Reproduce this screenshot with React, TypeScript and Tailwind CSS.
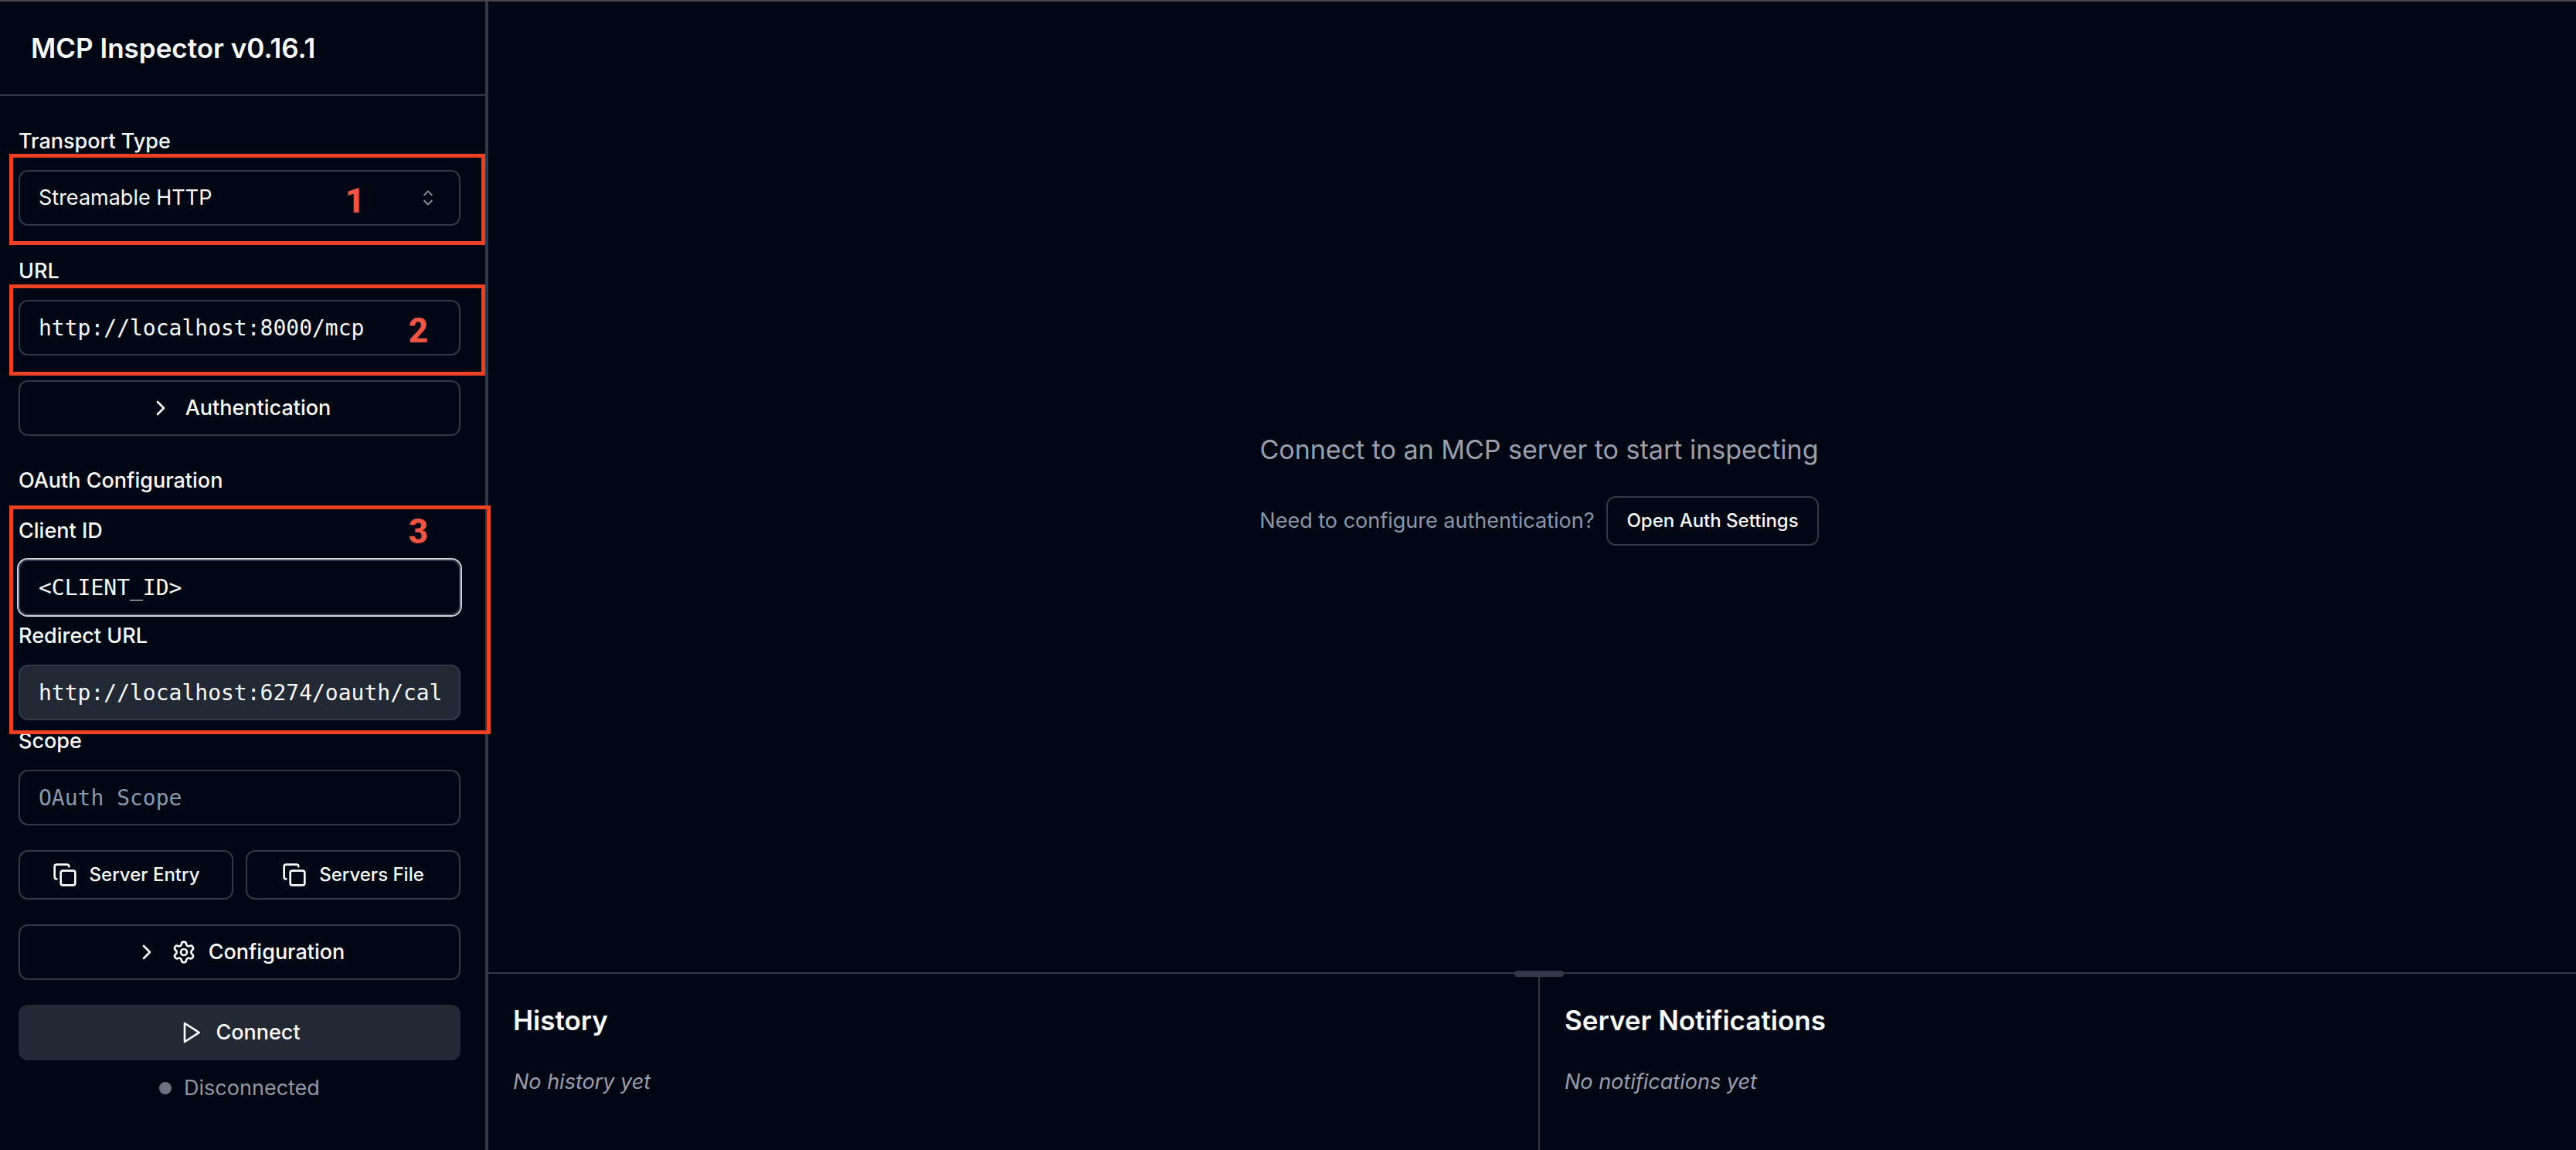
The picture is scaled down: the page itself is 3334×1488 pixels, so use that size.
import { ChevronRight, Copy, Settings } from "lucide-react";
import type { ReactNode } from "react";

const outline =
  "flex items-center justify-center gap-4 rounded-xl border-2 border-[#32374a] font-medium text-[#f8fafc]";
const field =
  "block h-[72px] w-full rounded-xl border-2 border-[#32374a] px-6 text-[#f8fafc] outline-none";
const mono = "font-['DejaVu_Sans_Mono',monospace] text-[28px] placeholder:text-[#8a97ad]";

function FieldLabel({ id, children }: { id: string; children: ReactNode }) {
  return (
    <label htmlFor={id} className="mb-[19px] block text-[27px] leading-[37px] font-medium">
      {children}
    </label>
  );
}

function CaretSort() {
  return (
    <svg
      viewBox="0 0 15 15"
      fill="currentColor"
      aria-hidden="true"
      className="pointer-events-none absolute top-5 right-[26px] size-8 text-[#8b8e98]"
    >
      <path
        fillRule="evenodd"
        clipRule="evenodd"
        d="M4.93179 5.43179C4.75605 5.60753 4.75605 5.89245 4.93179 6.06819C5.10753 6.24392 5.39245 6.24392 5.56819 6.06819L7.49999 4.13638L9.43179 6.06819C9.60753 6.24392 9.89245 6.24392 10.0682 6.06819C10.2439 5.89245 10.2439 5.60753 10.0682 5.43179L7.81819 3.18179C7.73379 3.0974 7.61933 3.04999 7.49999 3.04999C7.38064 3.04999 7.26618 3.0974 7.18179 3.18179L4.93179 5.43179ZM10.0682 9.56819C10.2439 9.39245 10.2439 9.10753 10.0682 8.93179C9.89245 8.75606 9.60753 8.75606 9.43179 8.93179L7.49999 10.8636L5.56819 8.93179C5.39245 8.75606 5.10753 8.75606 4.93179 8.93179C4.75605 9.10753 4.75605 9.39245 4.93179 9.56819L7.18179 11.8182C7.35753 11.9939 7.64245 11.9939 7.81819 11.8182L10.0682 9.56819Z"
      />
    </svg>
  );
}

function PlayIcon() {
  return (
    <svg
      viewBox="0 0 24 24"
      fill="none"
      stroke="currentColor"
      strokeWidth="2"
      strokeLinecap="round"
      strokeLinejoin="round"
      aria-hidden="true"
      className="size-8"
    >
      <polygon points="6 3 20 12 6 21 6 3" />
    </svg>
  );
}

const marker =
  "pointer-events-none absolute font-['Roboto',sans-serif] text-[44px] leading-[44px] font-extrabold text-[#ee5544]";
const frame = "pointer-events-none absolute z-10 border-5 border-[#ec4125]";

function Sidebar() {
  return (
    <aside className="w-[632px] shrink-0 border-r-4 border-[#32374a]">
      <header className="border-b-2 border-[#32374a] px-10 py-8">
        <h1 className="text-[35px] leading-[56px] font-semibold">MCP Inspector v0.16.1</h1>
      </header>

      <div className="pt-10 pr-8 pl-6">
        <FieldLabel id="transport">Transport Type</FieldLabel>
        <div className="relative">
          <select id="transport" className={`${field} appearance-none bg-transparent text-[27px]`}>
            <option>Streamable HTTP</option>
          </select>
          <CaretSort />
          <div className={`${frame} -top-[21px] -right-8 -bottom-[25px] -left-3`} />
          <span className={`${marker} top-[18px] right-[124px]`}>1</span>
        </div>

        <div className="mt-10">
          <FieldLabel id="url">URL</FieldLabel>
          <div className="relative">
            <input id="url" className={`${field} ${mono}`} defaultValue="http://localhost:8000/mcp" />
            <div className={`${frame} -top-5 -right-8 -bottom-[26px] -left-3`} />
            <span className={`${marker} top-[18px] right-[42px]`}>2</span>
          </div>
        </div>

        <button type="button" className={`${outline} mt-8 h-[72px] w-full text-[27px]`}>
          <ChevronRight className="size-8" />
          Authentication
        </button>

        <h2 className="mt-10 text-[27px] leading-9 font-medium">OAuth Configuration</h2>

        <div className="relative mt-7">
          <FieldLabel id="client">Client ID</FieldLabel>
          <input
            id="client"
            className={`${field} ${mono} ring-2 ring-[#d0d5e0]`}
            defaultValue="<CLIENT_ID>"
          />
          <div className="mt-2">
            <FieldLabel id="redirect">Redirect URL</FieldLabel>
            <input
              id="redirect"
              readOnly
              className={`${field} ${mono} bg-[#222834]`}
              value="http://localhost:6274/oauth/callback"
            />
          </div>
          <div className={`${frame} -top-[14px] -right-[39px] -bottom-[18px] -left-3`} />
          <span className={`${marker} -top-[2px] right-[42px]`}>3</span>
        </div>

        <div className="mt-2">
          <FieldLabel id="scope">Scope</FieldLabel>
          <input id="scope" className={`${field} ${mono}`} placeholder="OAuth Scope" />
        </div>

        <div className="mt-8 grid grid-cols-2 gap-4">
          <button type="button" className={`${outline} h-16 text-2xl`}>
            <Copy className="size-8" />
            Server Entry
          </button>
          <button type="button" className={`${outline} h-16 text-2xl`}>
            <Copy className="size-8" />
            Servers File
          </button>
        </div>

        <button type="button" className={`${outline} mt-8 h-[72px] w-full text-[27px]`}>
          <ChevronRight className="size-8" />
          <Settings className="size-8" />
          Configuration
        </button>

        <button
          type="button"
          className="mt-8 flex h-[72px] w-full items-center justify-center gap-4 rounded-xl bg-[#222834] text-[27px] font-medium"
        >
          <PlayIcon />
          Connect
        </button>

        <div className="mt-4 flex items-center justify-center gap-4 text-[27px] leading-10 text-[#9196a3]">
          <span className="size-4 rounded-full bg-[#6c727f]" />
          Disconnected
        </div>
      </div>
    </aside>
  );
}

function LogPanel({ title, empty, divided }: { title: string; empty: string; divided?: boolean }) {
  return (
    <section className={`flex-1 p-8 ${divided ? "border-r-2 border-[#32374a]" : ""}`}>
      <h2 className="mb-8 text-[35px] leading-[56px] font-semibold">{title}</h2>
      <p className="text-[27px] leading-10 text-[#9b9eab] italic">{empty}</p>
    </section>
  );
}

export default function App() {
  return (
    <div className="flex min-h-screen overflow-hidden border-t-2 border-[#4b4347] bg-[#010614] font-['Inter',sans-serif] text-[#f8fafc]">
      <Sidebar />
      <main className="-mr-[18px] flex flex-1 flex-col">
        <div className="flex flex-1 flex-col items-center justify-center">
          <p className="mb-8 text-[34px] leading-[56px] text-[#9b9eab]">
            Connect to an MCP server to start inspecting
          </p>
          <div className="flex items-center gap-4">
            <p className="text-[27px] text-[#8a97ad]">Need to configure authentication?</p>
            <button type="button" className={`${outline} h-16 px-6 text-2xl`}>
              Open Auth Settings
            </button>
          </div>
        </div>
        <div className="relative flex h-[230px] border-t-2 border-[#32374a]">
          <div className="absolute -top-1 left-1/2 h-2 w-16 -translate-x-1/2 rounded-full bg-[#32374a]" />
          <LogPanel title="History" empty="No history yet" divided />
          <LogPanel title="Server Notifications" empty="No notifications yet" />
        </div>
      </main>
    </div>
  );
}
